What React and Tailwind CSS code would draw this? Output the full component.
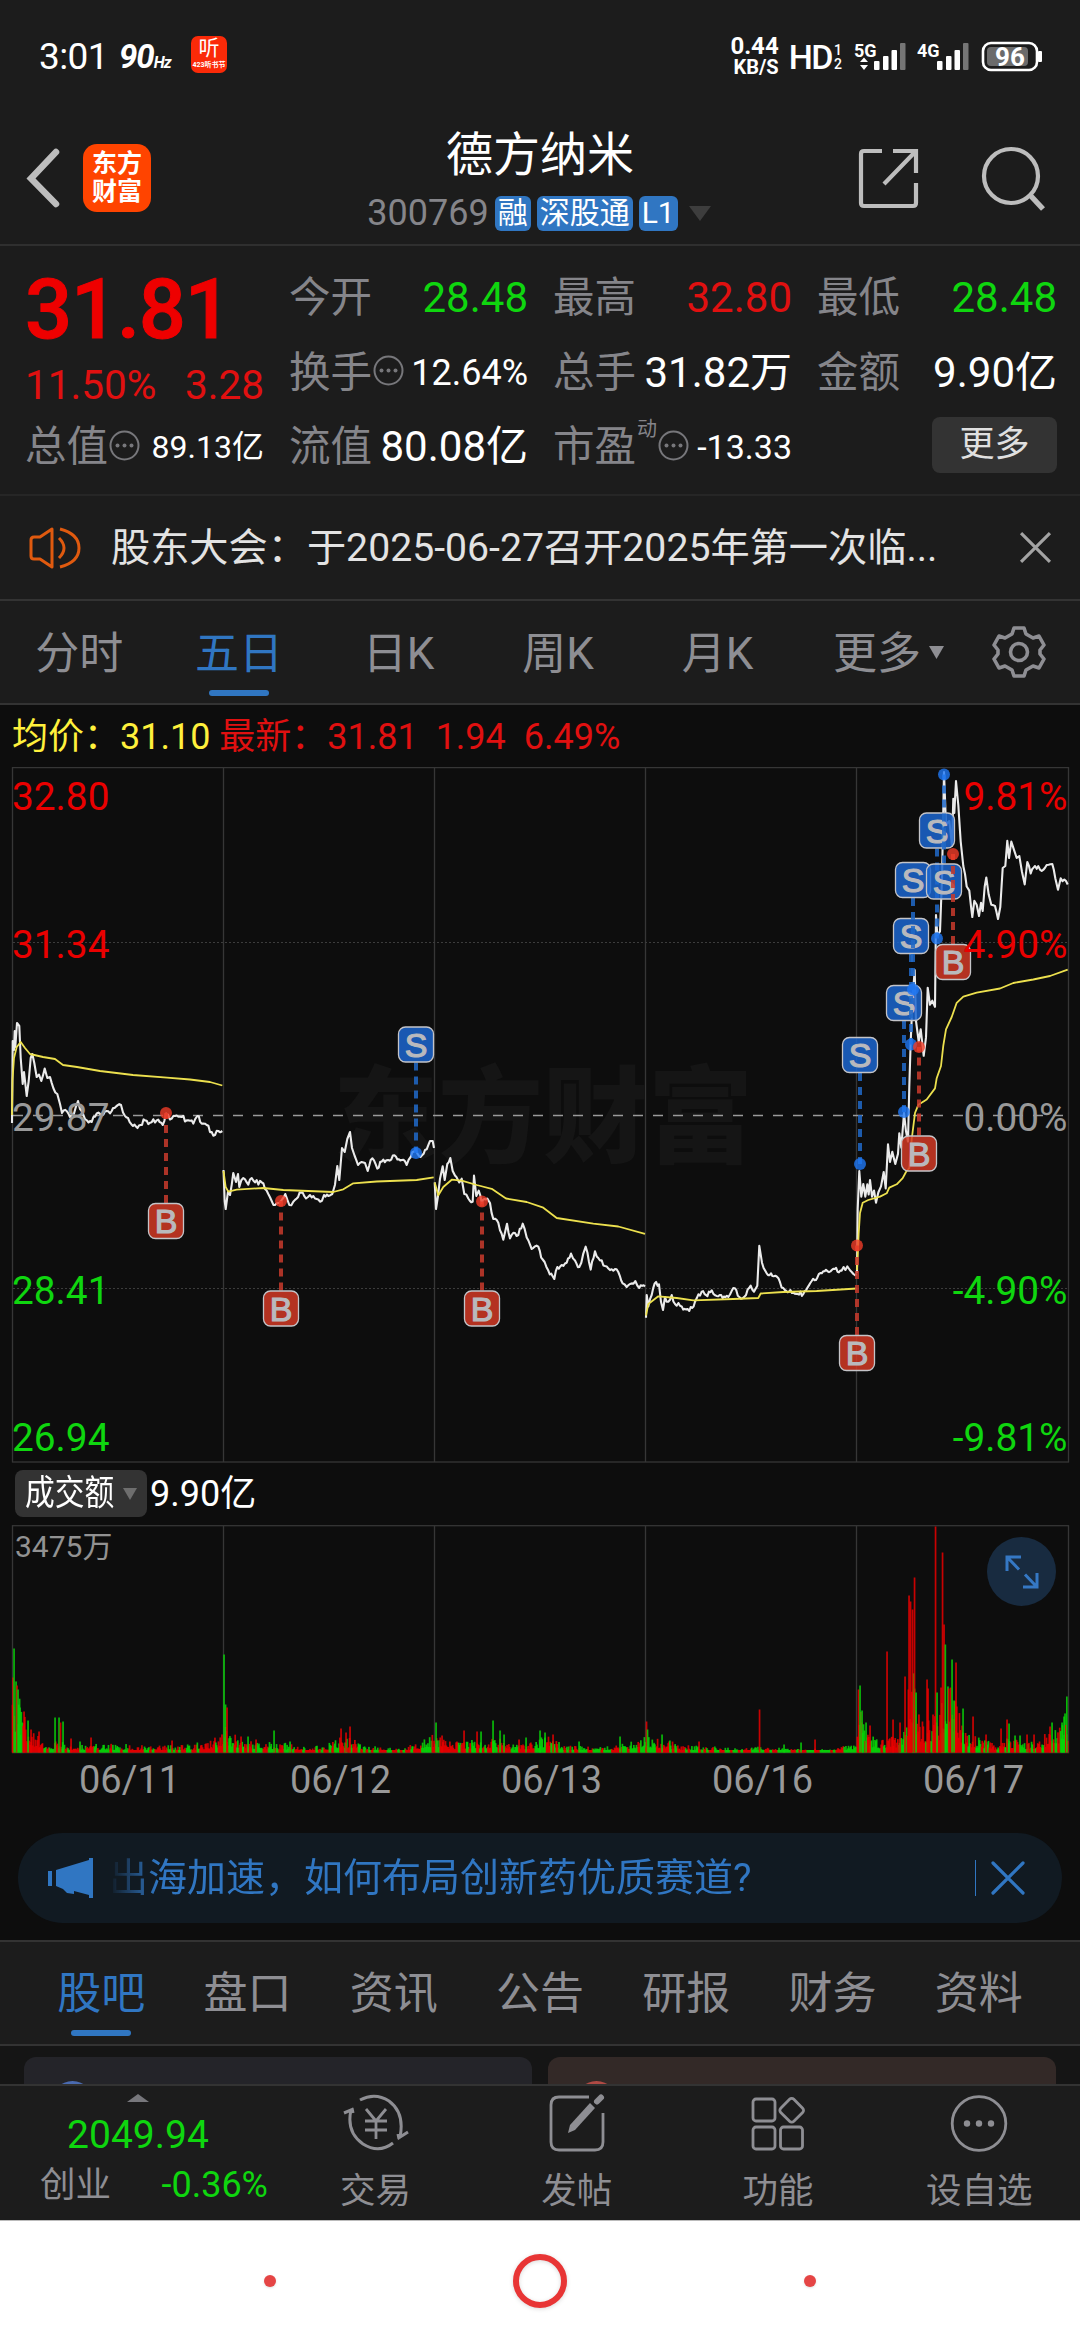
import React from "react";
import clsx from "clsx";

const UP = "#ea0000";
const DOWN = "#0fd60f";
const GRAY = "#8e8e93";

const periodTabs = ["分时", "五日", "日K", "周K", "月K"];
const infoTabs = ["股吧", "盘口", "资讯", "公告", "研报", "财务", "资料"];
const dates = ["06/11", "06/12", "06/13", "06/16", "06/17"];
const dayX = [12.5, 223.5, 434.5, 645.5, 856.5];

// Puntos [x, y] de la línea de precio, un arreglo por día
const priceDays = [
  [[12,1123],[12.7,1041],[14,1050],[14.7,1031],[15.3,1047],[17,1023],[19.3,1026],[20.7,1058],[22.7,1084],[24,1072],[26.7,1096],[28.7,1081],[30.7,1058],[32.3,1054],[34.3,1063],[36.7,1077],[39,1074.5],[41.3,1081],[44.7,1068.5],[47.3,1078],[50,1077],[53.3,1088],[57.3,1094],[60,1104],[62,1113],[66.7,1111],[70,1117],[74,1113.5],[78,1101],[80,1109],[83,1114],[87,1120.5],[91.7,1122],[96.7,1113.5],[101.7,1114.5],[106.7,1111],[111.7,1111],[116,1106.6],[121,1105],[123,1112.6],[128,1118],[133,1126],[139,1125.5],[145,1120.4],[150,1122.7],[156.7,1120.4],[162.7,1125],[166,1113.5],[170,1119.5],[175,1116],[181.7,1117],[186.7,1120.4],[193.3,1123.6],[197.3,1116],[201.7,1123.6],[206.7,1125],[211.7,1132],[215,1135],[218.3,1131],[222.3,1131]],
  [[223.5,1170],[224.7,1201],[225.7,1209],[228,1191.6],[230,1195],[233.3,1173],[236,1182],[238,1174],[239.3,1187],[243.3,1178],[248.3,1184.7],[251.7,1178],[255,1182.4],[261.7,1182.4],[265,1189],[268.3,1194],[271.7,1201],[275,1205],[281,1201],[285.3,1194],[289.3,1205],[293.3,1201.7],[296.7,1198.5],[301,1192.5],[306,1198.5],[310,1195],[315,1198.5],[320,1201.7],[324,1195],[328.3,1196],[332.3,1194],[335,1184.7],[337.3,1166],[339.3,1180],[342,1148],[344.7,1152],[347.3,1139],[350,1132],[352,1148],[354.7,1156],[358,1165],[361.7,1162],[365,1163],[367.7,1171],[370.7,1160],[374,1160.4],[377.3,1168.6],[381.7,1161.7],[388,1160],[396,1156.7],[401.7,1160],[406.7,1165],[410.7,1157],[415.7,1149],[420.7,1157],[425,1150],[430,1141],[432.7,1141],[434,1148]],
  [[434.7,1182.4],[436,1209],[438,1196],[440,1178.7],[442.7,1166.3],[444.7,1180],[447.3,1164],[450.3,1158],[452.7,1171],[455,1175.5],[459.3,1182.4],[461.7,1178.7],[464.3,1194],[468.3,1198.5],[472.7,1201.7],[474,1175.5],[476.3,1196],[478.7,1190.7],[481.7,1203],[487.3,1198.5],[490,1203],[493.3,1219],[498.3,1222.8],[503.3,1239.8],[507,1223.7],[510,1238.4],[515,1233],[518.3,1235],[522.7,1223.7],[526.7,1237.5],[531.7,1249],[538.3,1246.7],[542.7,1259.5],[548.3,1270.6],[554.3,1279],[557.3,1267],[561.7,1265],[566.7,1262.7],[571,1253.6],[575,1260.5],[579.3,1267],[583.3,1253.6],[585.7,1246.7],[590.7,1269.6],[595,1251.3],[600,1260.5],[606.7,1266.4],[613.3,1270.6],[618.3,1272],[622.7,1283.4],[626.7,1287],[631.7,1283.4],[635.3,1281],[639.3,1288],[645,1286.6]],
  [[646,1317.8],[646.7,1295],[648.3,1306.4],[651.7,1295],[654.7,1283.4],[659,1284.3],[661,1301.8],[663,1310],[665,1297],[668.3,1301.8],[671.7,1295],[675,1304],[681.7,1306.4],[689.3,1311],[695,1301.8],[701.7,1291.7],[706,1295],[711.7,1290.3],[718.3,1296.3],[728.3,1297],[733.3,1288],[739.3,1297],[746,1295],[750.7,1285.7],[754,1291.7],[757.3,1285.7],[759.3,1245.8],[762,1262.7],[766.7,1273.3],[776.7,1276.5],[783.3,1288],[793.3,1292.6],[803.3,1294],[811.7,1281],[821.7,1273.3],[833.3,1268.7],[841.7,1270.6],[847.3,1266.4],[851.7,1272],[856.7,1274]],
  [[857,1273],[857.7,1209],[859.3,1171],[861.3,1196.6],[863.3,1184],[865.3,1196.6],[867.3,1184.3],[868.7,1194.5],[870,1180],[872,1196.6],[874,1190.5],[876,1202.7],[878.3,1192.5],[881,1186.4],[883.7,1172],[885.7,1188.4],[888,1144.3],[890,1162],[892.3,1151.7],[895.3,1164],[898,1153.7],[899.3,1133.3],[901.3,1147.6],[904,1113],[906,1131.3],[908,1141.5],[909.3,1086.4],[910.7,1041.5],[912.7,996.6],[914.7,970],[916,1021],[918.7,1041.5],[920.7,1029.3],[923.7,1055.8],[926,1037.4],[927.7,987.7],[930,1004.8],[932.3,1000.7],[935,1006.8],[936,915],[937.3,935.4],[940,931.4],[942,878.3],[944,772],[946,825.3],[949.3,821],[952,845.7],[953.3,798.8],[954.3,813],[956,781],[958.3,805],[960.7,841.6],[963.3,866],[966.7,886.5],[969.3,890.6],[972.3,917],[974.3,900.8],[976.7,904.8],[979,916],[981,902.8],[982.7,911],[984.7,886.5],[986.3,877.5],[988.7,894.6],[991.3,904.8],[995,906],[998,919],[1000.3,907],[1002.7,868],[1005.3,866],[1007.3,840.8],[1009,858],[1011.3,841.6],[1014,849.8],[1016.7,858],[1019.3,856],[1022,872],[1024.7,884.4],[1027.3,862],[1030.7,873.4],[1035,866],[1041.7,871],[1046.7,865],[1052.3,864],[1055.3,878.3],[1058,889.7],[1060.7,878.3],[1064.3,879.5],[1067.7,884.4]],
];

const avgDays = [
  "12,1115 12.5,1080 14,1058 16.7,1047 20.7,1042 25,1048 30,1054 43,1057 55,1059 63,1065 77,1067 100,1071 133,1075 167,1077.7 190,1079.5 210,1082 222.3,1085.5",
  "223.5,1171 225.7,1187 228.3,1191.6 236.7,1189.7 263.3,1188 283.3,1190 333.3,1192 343.3,1189.3 353.3,1183.3 376.7,1181.5 416.7,1180 433.7,1177.4",
  "434.7,1182.4 438.3,1195.3 443.3,1187 451.7,1179.7 461.7,1180.6 476.7,1185 491.7,1188.8 506,1198.5 526.7,1202 543.3,1207.7 556.7,1218 593.3,1223.7 618.3,1226.5 645,1233.8",
  "646,1315.5 648.3,1304 658.3,1296.3 676.7,1298 693.3,1300.4 733.3,1299 758.3,1298 760.7,1293.5 783.3,1292 816.7,1291 856.7,1288.5",
  "857,1270 858.7,1233.3 860,1213 862.7,1202.7 868.3,1200 880,1196.6 886.7,1193.3 889.3,1187.6 896.7,1184.3 902.7,1178.2 906,1172 909.3,1168 911.7,1139.4 915,1113 918.3,1104.8 926.7,1099.5 935,1088.4 936.7,1078.2 941,1066 943.3,1045.6 946,1029.3 951.7,1017 956.7,1002.8 963.3,996.6 976.7,992.6 1000,988.5 1013.3,983 1033.3,979.5 1050,976 1067.7,969.7",
];

// Compras (B) y ventas (S): x, y del punto, y del centro de la etiqueta
const trades = [
  ["B", 166, 1113, 1221],
  ["B", 281, 1201, 1308.5],
  ["S", 416, 1153, 1044.5],
  ["B", 482, 1201.5, 1308.5],
  ["S", 860, 1164, 1055],
  ["B", 857, 1245.5, 1353],
  ["S", 904, 1112, 1003],
  ["S", 911, 1044.5, 936],
  ["S", 913, 989.5, 880],
  ["B", 919, 1047, 1153.5],
  ["S", 937, 938.5, 830.5],
  ["S", 944, 774.5, 881.5],
  ["B", 953, 854, 962],
];

const axisLabels = [
  ["32.80", "9.81%", 810, UP],
  ["31.34", "4.90%", 957.5, UP],
  ["29.87", "0.00%", 1131, "#999999"],
  ["28.41", "-4.90%", 1303.5, DOWN],
  ["26.94", "-9.81%", 1450.5, DOWN],
];

// Altura base del volumen [x, alto]
const volumeBase = [
  [12,60],[16,58],[20,42],[26,26],[34,16],[45,9],[62,9],[72,7],[110,7],[180,6],[205,9],[222,15],
  [224,34],[228,20],[236,14],[256,10],[285,8],[300,5],[325,6],[338,12],[352,13],[362,6],[400,3],[415,8],[433,16],
  [438,14],[450,9],[470,11],[490,12],[505,12],[515,6],[545,14],[556,14],[562,6],[610,5],[620,8],[643,13],
  [647,14],[665,11],[680,7],[700,6],[740,3],[760,5],[800,3],[835,3],[856,9],
  [859,45],[864,28],[872,14],[880,10],[888,14],[898,14],[906,30],[912,95],[916,40],[922,26],[930,28],[938,30],[945,60],[954,60],[960,30],[968,15],[985,12],[996,7],[1008,14],[1018,10],[1035,9],[1050,18],[1058,22],[1067,36],
];

const volumeSpikes = [
  [13,75,1],[14,104,0],[17,67,1],[18,63,0],[20,45,0],[24,41,1],[28,32,0],[31,23,1],[39,21,1],[55,35,0],[59,35,0],[60.5,30,1],[63,31,0],[71,14,1],[80,11,0],[91,15,1],[172,12,1],
  [224,98,0],[225.5,48,0],[227,45,1],[241,16,1],[248,16,0],[256,13,1],[274,22,0],[290,11,0],[341,24,1],[346,20,1],[350,26,1],
  [436,30,0],[442,17,1],[464,22,1],[477,21,1],[481,21,0],[493,32,0],[500,22,0],[504,18,0],[519,13,1],[526,15,0],[540,22,0],[545,20,0],[553,18,1],[579,11,0],[620,16,0],
  [646.5,31,1],[647.5,23,0],[662,18,0],[699,11,1],[759.5,43,1],[784,8,0],[801,10,0],[815,13,1],
  [858.5,63,1],[860,67,0],[862,42,0],[866,30,0],[870,27,1],[887,101,1],[893,33,1],[900,30,1],[905,76,1],[909,157,1],[910.5,151,1],[912.5,143,1],[914.5,175,1],[916,60,0],[927,73,1],[928,64,1],[933,38,1],[935.5,226,1],[937,60,0],[941,65,1],[942.5,200,1],[944,128,1],[945.3,108,0],[948.7,64,1],[952,93,0],[954,52,0],[956,90,1],[963,44,0],[973,36,1],[986,18,1],[1001,24,1],[1007,33,1],[1009,29,0],[1015,17,0],[1020,17,0],[1027,18,1],[1034,18,1],[1050,26,1],[1052,30,0],[1062,30,0],[1064,36,0],[1066.8,56,0],
];

function noise(n) {
  const v = Math.sin(n * 127.1 + 11.7) * 43758.5453;
  return v - Math.floor(v);
}

// Interpola entre los puntos clave y agrega la variación de cada minuto
function priceLine(points, seed) {
  const out = [];
  points.forEach(([x, y], i) => {
    out.push(`${x},${y}`);
    const next = points[i + 1];
    if (!next) return;
    const steps = Math.floor((next[0] - x) / 1.4);
    for (let s = 1; s < steps; s++) {
      const t = s / steps;
      const jitter = (noise(seed + i * 9 + s) - 0.5) * 5;
      const px = x + (next[0] - x) * t;
      out.push(`${px.toFixed(1)},${(y + (next[1] - y) * t + jitter).toFixed(1)}`);
    }
  });
  return out.join(" ");
}

function baseHeight(x) {
  for (let i = 1; i < volumeBase.length; i++) {
    const [x1, h1] = volumeBase[i - 1];
    const [x2, h2] = volumeBase[i];
    if (x <= x2) return h1 + ((h2 - h1) * (x - x1)) / (x2 - x1);
  }
  return 30;
}

function buildVolume() {
  const bars = [];
  for (let i = 0; i < 1200; i++) {
    const x = 12.5 + i * 0.88;
    const r = noise(i);
    const h = Math.max(2.5, baseHeight(x) * (0.35 + r * r * 0.9));
    bars.push([x, h, noise(Math.floor(i / 3) + 500) > 0.5 ? 1 : 0]);
  }
  return bars;
}

const volumeBars = buildVolume();

function StatusBar() {
  return (
    <div className="h-[110px] flex items-center justify-between pt-[3px] pl-[39px] pr-[37px] text-white">
      <div className="flex items-center h-[38px]">
        <span className="text-[37px] leading-[38px] w-[80px] tracking-[-0.6px]">3:01</span>
        <span className="flex items-baseline font-bold italic w-[72px] tracking-[-1px]">
          <span className="text-[33px] leading-[38px]">90</span>
          <span className="text-[16px]">Hz</span>
        </span>
        <div className="w-9 h-[37px] rounded-[7px] bg-[#fb2a08] flex flex-col items-center overflow-hidden mb-1">
          <span className="text-[21px] leading-[25px]">听</span>
          <span className="text-[7px] leading-[8px] font-bold">423听书节</span>
        </div>
      </div>
      <div className="flex items-center h-[38px]">
        <div className="flex flex-col items-end font-bold w-[52px]">
          <span className="text-[24px] leading-[21px]">0.44</span>
          <span className="text-[20px] leading-[20px]">KB/S</span>
        </div>
        <span className="text-[34px] leading-[38px] font-medium tracking-[-1.5px] ml-[10px]">HD</span>
        <span className="flex flex-col text-[14px] leading-[14px] font-medium w-[10px] ml-[2px]">
          <span>1</span>
          <span>2</span>
        </span>
        <Signal label="5G" arrows />
        <Signal label="4G" />
        <svg width="62" height="32" viewBox="0 0 62 32" className="ml-[11px]">
          <rect x="2" y="2" width="54" height="27" rx="8" fill="none" stroke="#fff" strokeWidth="2.6" />
          <rect x="6" y="6" width="41" height="19" rx="4" fill="#6b6b6b" />
          <rect x="57" y="10" width="4" height="11" rx="1" fill="#fff" />
          <text x="29" y="25" fill="#fff" fontSize="26" fontWeight="700" textAnchor="middle">96</text>
        </svg>
      </div>
    </div>
  );
}

function Signal({ label, arrows }) {
  return (
    <svg width="53" height="32" viewBox="0 0 53 32" className="ml-[10px]">
      <text x="0" y="16" fill="#fff" fontSize="18" fontWeight="700">{label}</text>
      {arrows && <path d="M6 21 L10 16.5 L14 21 Z M6 24 L10 29 L14 24 Z" fill="#fff" />}
      <rect x="20" y="20" width="5.5" height="9" rx="1" fill="#fff" />
      <rect x="29" y="15" width="5.5" height="14" rx="1" fill="#fff" />
      <rect x="37.5" y="9" width="5.5" height="20" rx="1" fill="#fff" />
      <rect x="46" y="2" width="5.5" height="27" rx="1" fill="#757575" />
    </svg>
  );
}

function Header() {
  return (
    <div className="h-[136px] flex items-start justify-between border-b-2 border-[#2f2f2f]">
      <div className="flex items-center pt-[34px] pl-[24px] w-[330px]">
        <svg width="38" height="62" viewBox="0 0 38 62" fill="none" stroke="#bdbdbd" strokeWidth="6.5">
          <path d="M32 5 L7 31.5 L32 57" strokeLinejoin="miter" strokeLinecap="round" />
        </svg>
        <div className="ml-[21px] w-[68px] h-[68px] rounded-[14px] bg-[#ff4400] text-white font-bold text-[25px] leading-[28px] flex flex-col items-center justify-center">
          <span>东方</span>
          <span>财富</span>
        </div>
      </div>
      <div className="flex flex-col items-center pt-[19px]">
        <h1 className="text-[47px] leading-[52px] text-white">德方纳米</h1>
        <div className="flex items-center mt-[14px] h-[36px] ml-[-2px]">
          <span className="text-[36px] leading-[36px] text-[#85858a]">300769</span>
          <Tag>融</Tag>
          <Tag>深股通</Tag>
          <Tag>L1</Tag>
          <svg width="22" height="15" viewBox="0 0 22 15" className="ml-[11px]">
            <path d="M0 0 H22 L11 15 Z" fill="#3d3d3d" />
          </svg>
        </div>
      </div>
      <div className="flex items-center justify-end w-[330px] pt-[35px] pr-[33px] gap-[62px]">
        <svg width="62" height="62" viewBox="0 0 62 62" fill="none" stroke="#bdbdbd" strokeWidth="4.2">
          <path d="M25 4 H7 Q4 4 4 7 V56 Q4 59 7 59 H56 Q59 59 59 56 V36" />
          <path d="M36 4 H59 V26 M58 5 L27 37" />
        </svg>
        <svg width="66" height="66" viewBox="0 0 66 66" fill="none" stroke="#bdbdbd" strokeWidth="4.2">
          <circle cx="30" cy="31" r="27" />
          <path d="M49 50 L62 64" strokeWidth="5.5" />
        </svg>
      </div>
    </div>
  );
}

function Tag({ children }) {
  return (
    <span className="h-[35px] rounded-[6px] bg-[#3076c2] text-white text-[30px] leading-[34px] px-[3px] ml-[6px]">
      {children}
    </span>
  );
}

function MoreDots() {
  return (
    <svg width="31" height="31" viewBox="0 0 31 31" className="shrink-0 mb-1 ml-px">
      <circle cx="15.5" cy="15.5" r="14" fill="none" stroke="#77777b" strokeWidth="2" />
      <circle cx="8.5" cy="15.5" r="2" fill="#77777b" />
      <circle cx="15.5" cy="15.5" r="2" fill="#77777b" />
      <circle cx="22.5" cy="15.5" r="2" fill="#77777b" />
    </svg>
  );
}

function Stat({ label, value, dots, sup, valueClass }) {
  return (
    <div className="h-[74.5px] flex items-center">
      <span className="text-[41.5px] leading-[48px] text-[#85858a] whitespace-nowrap">{label}</span>
      {sup && <span className="text-[20px] leading-[20px] text-[#85858a] mb-[37px] ml-[1px]">{sup}</span>}
      {dots && <MoreDots />}
      <span className={clsx("ml-auto whitespace-nowrap leading-[48px]", valueClass)}>{value}</span>
    </div>
  );
}

function Quote() {
  return (
    <div className="h-[250px] flex pl-[25px] pr-[22px] pt-[15px] border-b-2 border-[#262626]">
      <div className="w-[239px] flex flex-col">
        <div className="h-[93px] text-[83px] leading-[98px] font-medium tracking-[-1.2px] text-[#ee0000] [-webkit-text-stroke:1px_#ee0000]">31.81</div>
        <div className="h-[56px] pt-[6px] flex items-center justify-between text-[40.5px] text-[#e01010]">
          <span>11.50%</span>
          <span>3.28</span>
        </div>
        <Stat label="总值" dots value="89.13亿" valueClass="text-[32px] text-white" />
      </div>
      <div className="ml-[25px] flex-1 grid grid-cols-[239px_239px_240px] gap-x-[25px] content-start">
        <Stat label="今开" value="28.48" valueClass="text-[42px] text-[#0fd60f]" />
        <Stat label="最高" value="32.80" valueClass="text-[42px] text-[#e01010]" />
        <Stat label="最低" value="28.48" valueClass="text-[42px] text-[#0fd60f]" />
        <Stat label="换手" dots value="12.64%" valueClass="text-[36px] text-white" />
        <Stat label="总手" value="31.82万" valueClass="text-[42px] text-white" />
        <Stat label="金额" value="9.90亿" valueClass="text-[42px] text-white" />
        <Stat label="流值" value="80.08亿" valueClass="text-[42px] text-white" />
        <Stat label="市盈" sup="动" dots value="-13.33" valueClass="text-[34px] text-white" />
        <div className="h-[69px] flex items-center justify-end">
          <button className="w-[125px] h-[56px] rounded-[8px] bg-[#333333] text-[#e0e0e0] text-[35px] leading-[50px]">更多</button>
        </div>
      </div>
    </div>
  );
}

function Notice() {
  return (
    <div className="h-[105px] flex items-center pl-[28px] pr-[28px] border-b-2 border-[#333]">
      <svg width="54" height="46" viewBox="0 0 54 46" fill="none" stroke="#e05a0f" strokeWidth="3">
        <path d="M24 4 V42 L12 34 H6 Q3 34 3 31 V15 Q3 12 6 12 H12 Z" strokeLinejoin="round" />
        <path d="M31 13 Q41 23 31 33" />
        <path d="M32 4 Q51 9 51 23 Q51 37 32 42" />
      </svg>
      <span className="ml-[29px] text-[39.2px] leading-[50px] text-[#e3e3e3] whitespace-nowrap">
        股东大会：于2025-06-27召开2025年第一次临...
      </span>
      <svg width="33" height="33" viewBox="0 0 32 32" className="ml-auto" stroke="#a3a3a3" strokeWidth="3">
        <path d="M2 2 L30 30 M30 2 L2 30" />
      </svg>
    </div>
  );
}

function PeriodTabs() {
  return (
    <div className="h-[104px] flex border-b-2 border-[#333] text-[44px] leading-[52px] text-[#8e8e93]">
      {periodTabs.map((tab) => (
        <div
          key={tab}
          className={clsx("w-[159.6px] pt-[27px] flex flex-col items-center", tab === "五日" && "text-[#3076c2]")}
        >
          <span className="ml-[-1px]">{tab}</span>
          {tab === "五日" && <span className="mt-[10px] w-[60px] h-[6px] rounded-full bg-[#3076c2]" />}
        </div>
      ))}
      <div className="pt-[27px] pl-[35px] flex gap-[8px]">
        <span>更多</span>
        <svg width="15" height="13" viewBox="0 0 15 13" className="mt-[18px]">
          <path d="M0 0 H15 L7.5 13 Z" fill={GRAY} />
        </svg>
      </div>
      <svg width="54" height="54" viewBox="0 0 54 54" className="ml-auto mr-[34px] mt-[24px]" fill="none" stroke={GRAY} strokeWidth="3.6" strokeLinejoin="round">
        <path d="M22 3 H32 L34 9 L41 13 L47 11 L52 20 L48 25 V29 L52 34 L47 43 L41 41 L34 45 L32 51 H22 L20 45 L13 41 L7 43 L2 34 L6 29 V25 L2 20 L7 11 L13 13 L20 9 Z" />
        <circle cx="27" cy="27" r="8.5" />
      </svg>
    </div>
  );
}

function TradeMark({ type, x, dotY, tagY }) {
  const sell = type === "S";
  const tagEdge = tagY > dotY ? tagY - 18 : tagY + 18;
  return (
    <g>
      <line x1={x} y1={tagEdge} x2={x} y2={dotY} stroke={sell ? "#2069c8" : "#c83a2c"} strokeWidth="4" strokeDasharray="8 6" opacity="0.85" />
      <circle cx={x} cy={dotY} r="6" fill={sell ? "#1f78f5" : "#f03c28"} opacity="0.8" />
      <rect x={x - 17.5} y={tagY - 17.5} width="35" height="35" rx="7" fill={sell ? "#1c66d0" : "#d23a26"} fillOpacity="0.85" stroke="#c4c4c8" strokeWidth="1.3" />
      <text x={x} y={tagY + 12} textAnchor="middle" fontSize="34" stroke="#b9b9bd" strokeWidth="1.2" fill="#b9b9bd" className="font-['Liberation_Sans',sans-serif]">{type}</text>
    </g>
  );
}

function PriceChart() {
  return (
    <svg width="1080" height="697" viewBox="0 767 1080 697" className="block">
      <text x="543" y="1154" textAnchor="middle" fontSize="105" fontWeight="900" fill="#151515">东方财富</text>
      <g stroke="#363636" strokeWidth="1.3" fill="none">
        <rect x="12.5" y="767.6" width="1056" height="694.4" />
        {dayX.slice(1).map((x) => (
          <line key={x} x1={x} y1="768" x2={x} y2="1462" />
        ))}
        <path d="M13 942.5 H1068 M13 1288.5 H1068" strokeDasharray="2 2" strokeWidth="1" stroke="#3c3c3c" />
      </g>
      <path d="M13 1115.5 H1068" stroke="#9a9a9a" strokeWidth="1.6" strokeDasharray="10 10" />
      {priceDays.map((points, i) => (
        <polyline key={i} points={priceLine(points, i * 700)} fill="none" stroke="#ebebeb" strokeWidth="2.1" strokeLinejoin="round" />
      ))}
      {avgDays.map((points) => (
        <polyline key={points} points={points} fill="none" stroke="#ece04e" strokeWidth="1.8" strokeLinejoin="round" />
      ))}
      {trades.map(([type, x, dotY, tagY]) => (
        <TradeMark key={x} type={type} x={x} dotY={dotY} tagY={tagY} />
      ))}
      {axisLabels.map(([price, pct, y, color]) => (
        <g key={price} fill={color} fontSize="38.8">
          <text x="12" y={y}>{price}</text>
          <text x="1067.5" y={y} textAnchor="end">{pct}</text>
        </g>
      ))}
    </svg>
  );
}

function VolumeChart() {
  return (
    <div className="relative">
      <svg width="1080" height="230" viewBox="0 1525 1080 230" className="block">
        <g stroke="#363636" strokeWidth="1.3" fill="none">
          <rect x="12.5" y="1525.7" width="1056" height="227" />
          {dayX.slice(1).map((x) => (
            <line key={x} x1={x} y1="1526" x2={x} y2="1752" />
          ))}
        </g>
        {volumeBars.concat(volumeSpikes).map(([x, h, up], i) => (
          <rect key={i} x={x - 0.8} y={1752.5 - h} width="1.7" height={h} fill={up ? UP : "#08d608"} opacity="0.85" />
        ))}
        <text x="15" y="1557" fontSize="30" fill="#929292">3475万</text>
      </svg>
      <button className="absolute right-[24px] top-[12px] w-[69px] h-[69px] rounded-full bg-[#182b40] flex items-center justify-center">
        <svg width="36" height="36" viewBox="0 0 36 36" fill="none" stroke="#3578c4" strokeWidth="3">
          <path d="M3 17 V3 H17 M3.5 3.5 L15 15.5 M33 19 V33 H19 M32.5 32.5 L21 20.5" />
        </svg>
      </button>
    </div>
  );
}

function ChartPanel() {
  return (
    <div className="h-[1235px] bg-[#0d0d0d] flex flex-col">
      <div className="h-[62px] pt-[2px] flex items-center pl-[12px] text-[36px] leading-[48px] whitespace-pre">
        <span className="text-[#fff03c]">均价：31.10 </span>
        <span className="text-[#e01010]">最新：31.81  1.94  6.49%</span>
      </div>
      <PriceChart />
      <div className="h-[61px] pt-[6px] flex items-start pl-[15px] text-white">
        <div className="w-[132px] h-[47px] rounded-[8px] bg-[#333333] flex items-center pl-[10px]">
          <span className="w-[98px] text-[35px] leading-[44px] whitespace-nowrap origin-left scale-x-[0.85]">成交额</span>
          <svg width="14" height="12" viewBox="0 0 14 12">
            <path d="M0 0 H14 L7 12 Z" fill="#6e6e6e" />
          </svg>
        </div>
        <span className="ml-[3px] text-[36px] leading-[48px]">9.90亿</span>
      </div>
      <VolumeChart />
      <div className="h-[78px] flex pl-[24px] pt-[2px]">
        {dates.map((d) => (
          <span key={d} className="w-[211px] text-center text-[38px] leading-[46px] text-[#999999]">{d}</span>
        ))}
      </div>
      <div className="mx-[18px] h-[90px] rounded-full bg-[#111a22] flex items-center pl-[29px] pr-[37px]">
        <svg width="47" height="42" viewBox="0 0 47 42" fill="#3076c2">
          <path d="M1 14 H5 V29 H1 Z M9 13 L42 3 V1 H46 V41 H42 V38 L27 34 V37 L20 36 L16 32 L9 29 Z" />
        </svg>
        <span className="ml-[15px] text-[39px] leading-[50px] text-[#3076c2] whitespace-nowrap [mask-image:linear-gradient(to_right,transparent,black_48px)]">
          出海加速，如何布局创新药优质赛道?
        </span>
        <span className="ml-auto w-[1.5px] h-[36px] bg-[#3076c2]" />
        <svg width="34" height="34" viewBox="0 0 34 34" className="ml-[15px]" stroke="#3076c2" strokeWidth="3.2" strokeLinecap="round">
          <path d="M2 2 L32 32 M32 2 L2 32" />
        </svg>
      </div>
    </div>
  );
}

function InfoTabs() {
  return (
    <div className="h-[106px] flex px-[28px] border-y-2 border-[#333] text-[44px] leading-[52px] text-[#8e8e93]">
      {infoTabs.map((tab, i) => (
        <div key={tab} className={clsx("flex-1 pt-[26px] flex flex-col items-center", i === 0 && "text-[#3076c2]")}>
          <span>{tab}</span>
          {i === 0 && <span className="mt-[10px] w-[60px] h-[6px] rounded-full bg-[#3076c2]" />}
        </div>
      ))}
    </div>
  );
}

function Cards() {
  return (
    <div className="h-[38px] overflow-hidden bg-[#151515] pt-[11px] px-[24px] flex gap-[16px]">
      <div className="flex-1 h-[90px] rounded-t-[12px] bg-[#242429] pt-[24px] pl-[27px]">
        <div className="w-[43px] h-[43px] rounded-full bg-[#4a6ab0]" />
      </div>
      <div className="flex-1 h-[90px] rounded-t-[12px] bg-[#332927] pt-[24px] pl-[27px]">
        <div className="w-[43px] h-[43px] rounded-full bg-[#b04a44]" />
      </div>
    </div>
  );
}

function NavItem({ label, children }) {
  return (
    <div className="w-[201.2px] flex flex-col items-center pt-[7px]">
      <svg width="66" height="62" viewBox="0 0 66 62" fill="none" stroke={GRAY} strokeWidth="2.8">
        {children}
      </svg>
      <span className="mt-[12px] text-[35.5px] leading-[48px] text-[#8e8e93]">{label}</span>
    </div>
  );
}

function BottomNav() {
  return (
    <div className="h-[136px] flex border-t-2 border-[#333]">
      <div className="w-[275px] pt-[8px] flex flex-col items-center">
        <svg width="22" height="8" viewBox="0 0 22 8">
          <path d="M0 8 L11 0 L22 8 Z" fill="#77777c" />
        </svg>
        <span className="mt-[9px] ml-px text-[39px] leading-[48px] text-[#0fd60f]">2049.94</span>
        <div className="flex self-start ml-[40px] w-[228px] justify-between text-[36px] leading-[48px] mt-[2px]">
          <span className="text-[#8e8e93] text-[35.5px]">创业</span>
          <span className="text-[#0fd60f]">-0.36%</span>
        </div>
      </div>
      <NavItem label="交易">
        <path d="M17 7 Q32 -1 46 8 Q62 20 57 44 L65 39 M56 46 L55 41" strokeWidth="3" />
        <path d="M50 50 Q36 61 20 51 Q3 39 8 17 L1 20 M9 15 L10 20" strokeWidth="3" />
        <path d="M23 16 L33 28 L43 16 M22 28 H44 M22 37 H44 M33 28 V46" />
      </NavItem>
      <NavItem label="发帖">
        <path d="M45 4 H15 Q7 4 7 12 V49 Q7 57 15 57 H51 Q59 57 59 49 V20" />
        <path d="M24 40 L26 32 L46 10 L51 15 L31 37 Z" fill={GRAY} stroke="none" />
        <path d="M53 8.5 L57 4.5" strokeWidth="6" strokeLinecap="round" />
      </NavItem>
      <NavItem label="功能">
        <rect x="8" y="6" width="22" height="22" rx="3" />
        <rect x="8" y="34" width="22" height="22" rx="3" />
        <rect x="35.5" y="34" width="22" height="22" rx="3" />
        <rect x="37.5" y="8" width="18.5" height="18.5" rx="3" transform="rotate(45 46.7 17.2)" />
      </NavItem>
      <NavItem label="设自选">
        <circle cx="33" cy="30.5" r="26.8" />
        <circle cx="21" cy="30.5" r="3.2" fill={GRAY} stroke="none" />
        <circle cx="33" cy="30.5" r="3.2" fill={GRAY} stroke="none" />
        <circle cx="45" cy="30.5" r="3.2" fill={GRAY} stroke="none" />
      </NavItem>
    </div>
  );
}

function SystemNav() {
  return (
    <div className="h-[120px] bg-white flex items-center justify-center gap-[237px] border-t border-[#bbb]">
      <span className="w-[12px] h-[12px] rounded-full bg-[#e54545] shadow-sm" />
      <span className="w-[54px] h-[54px] rounded-full border-[6px] border-[#e83535] drop-shadow-sm" />
      <span className="w-[12px] h-[12px] rounded-full bg-[#e54545] shadow-sm" />
    </div>
  );
}

export default function App() {
  return (
    <div className="w-[1080px] h-[2340px] overflow-hidden bg-[#1c1c1c] font-['Roboto','Noto_Sans_CJK_SC',sans-serif] flex flex-col">
      <StatusBar />
      <Header />
      <Quote />
      <Notice />
      <PeriodTabs />
      <ChartPanel />
      <InfoTabs />
      <Cards />
      <BottomNav />
      <SystemNav />
    </div>
  );
}
